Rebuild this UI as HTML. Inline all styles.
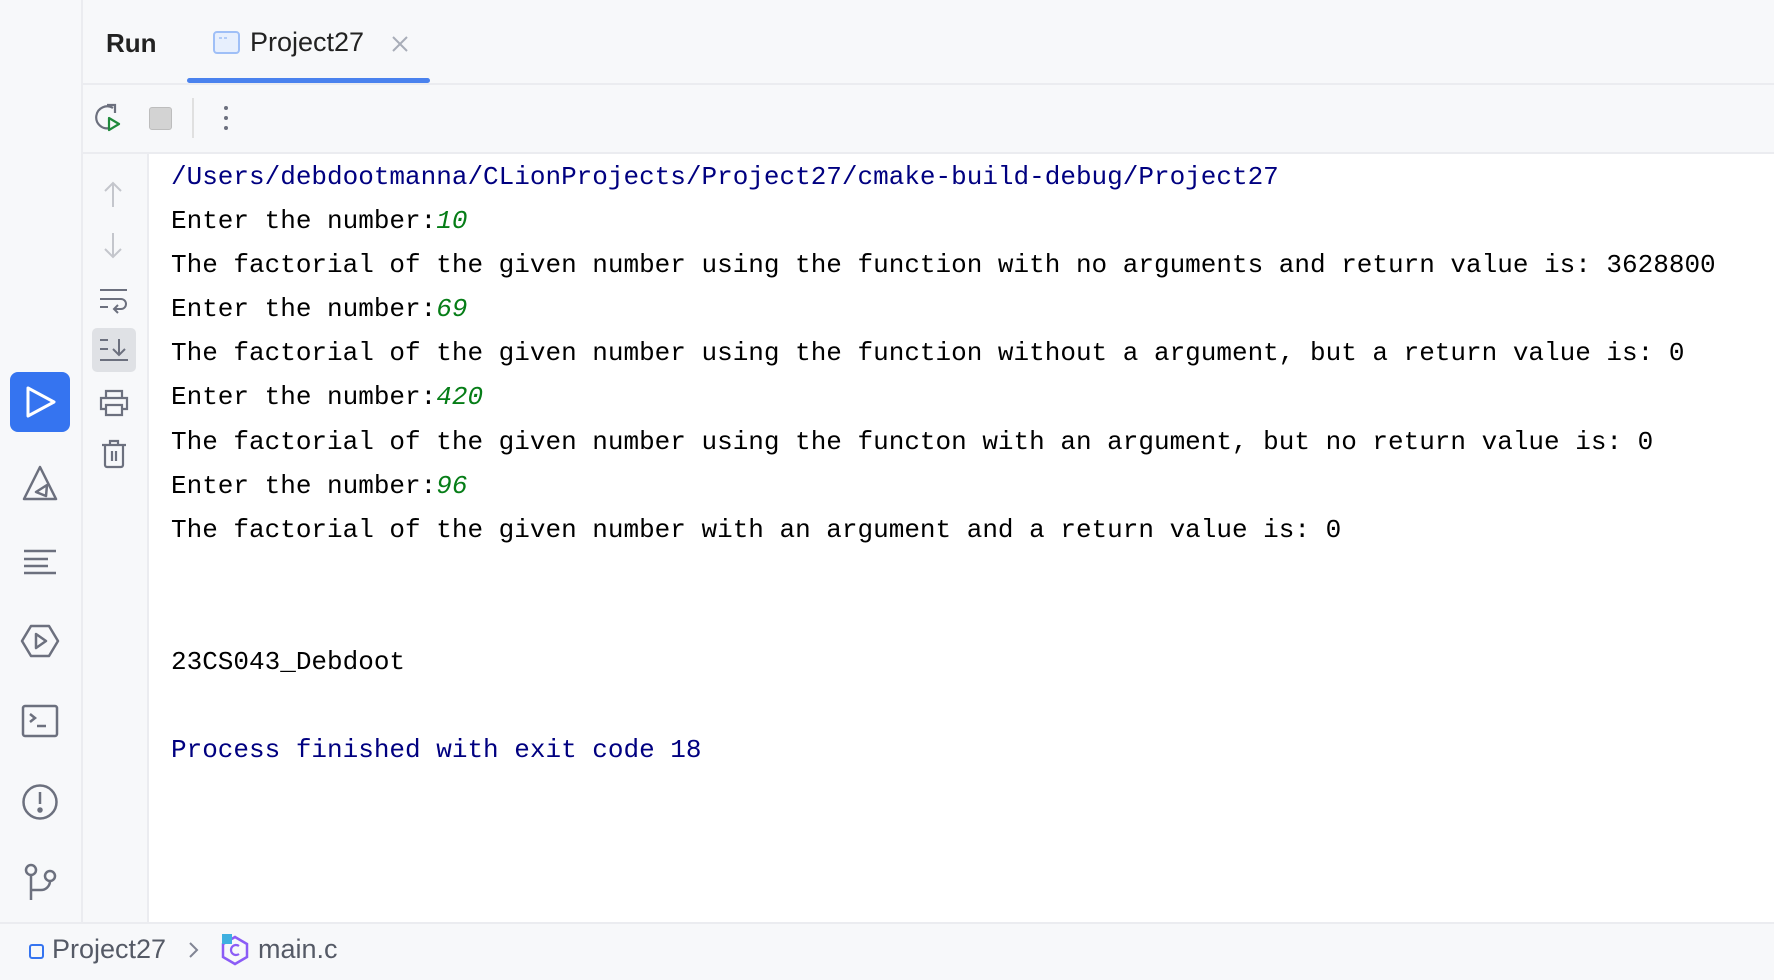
<!DOCTYPE html><html><head><style>
*{margin:0;padding:0;box-sizing:border-box}
body{width:1774px;height:980px;background:#f7f8fa;position:relative;overflow:hidden;font-family:"Liberation Sans",sans-serif}
.a{position:absolute}
.mono{font-family:"Liberation Mono",monospace;font-size:26px;white-space:pre;line-height:44.1px}
svg{position:absolute;overflow:visible}
</style></head><body>
<div class="a" style="left:81px;top:0;width:2px;height:922px;background:#ebecf0"></div>
<div class="a" style="left:83px;top:83px;width:1691px;height:2px;background:#ebecf0"></div>
<div class="a" style="left:83px;top:152px;width:1691px;height:2px;background:#ebecf0"></div>
<div class="a" style="left:147px;top:154px;width:1627px;height:768px;background:#fff;border-left:2px solid #ebecf0"></div>
<div class="a" style="left:0;top:922px;width:1774px;height:58px;background:#f7f8fa;border-top:2px solid #ebecf0"></div>
<!-- tabs -->
<div class="a" style="left:106px;top:28px;font-size:26px;font-weight:bold;color:#222">Run</div>
<svg style="left:213px;top:31px" width="28" height="24"><rect x="1" y="1" width="25" height="21" rx="3" fill="#e7effd" stroke="#9fbff7" stroke-width="2"/><path d="M6 7h3M11 7h3" stroke="#9fbff7" stroke-width="1.5"/></svg>
<div class="a" style="left:250px;top:27px;font-size:27px;color:#222">Project27</div>
<svg style="left:393px;top:37px" width="14" height="14"><path d="M0 0L14 14M14 0L0 14" stroke="#a8adb8" stroke-width="2"/></svg>
<div class="a" style="left:187px;top:78px;width:243px;height:5px;border-radius:3px;background:#4a82ee"></div>
<!-- toolbar -->
<svg style="left:94px;top:104px" width="30" height="30"><path d="M19 4a11 11 0 1 0-3 20" fill="none" stroke="#6c707e" stroke-width="2.2"/><path d="M13 1h8v8" fill="none" stroke="#6c707e" stroke-width="2.2"/><path d="M15 14l10 6-10 6z" fill="none" stroke="#208a3c" stroke-width="2.2" stroke-linejoin="round"/></svg>
<div class="a" style="left:149px;top:107px;width:23px;height:23px;border-radius:3px;background:#d3d3d3;border:1.5px solid #bdbdbd"></div>
<div class="a" style="left:192px;top:98px;width:2px;height:40px;background:#e0e0e0"></div>
<svg style="left:222px;top:106px" width="8" height="26"><circle cx="4" cy="2" r="2" fill="#6c707e"/><circle cx="4" cy="12" r="2" fill="#6c707e"/><circle cx="4" cy="22" r="2" fill="#6c707e"/></svg>
<!-- left strip -->
<div class="a" style="left:10px;top:372px;width:60px;height:60px;border-radius:8px;background:#3574f0"></div>
<svg style="left:26px;top:386px" width="30" height="32"><path d="M2 2L28 16L2 30Z" fill="none" stroke="#fff" stroke-width="3" stroke-linejoin="round"/></svg>
<svg style="left:22px;top:465px" width="36" height="36" fill="none" stroke="#6c707e" stroke-width="2.5"><path d="M18 2L34 34H2Z" stroke-linejoin="round"/><path d="M25 20L14 27L24 31Z" stroke-linejoin="round"/></svg>
<svg style="left:24px;top:549px" width="32" height="26" stroke="#6c707e" stroke-width="2.5"><path d="M0 2h32M0 10h24M0 17h24M0 24h32"/></svg>
<svg style="left:21px;top:624px" width="38" height="34" fill="none" stroke="#6c707e" stroke-width="2.5"><path d="M10 2h18l9 15-9 15H10L1 17Z" stroke-linejoin="round"/><path d="M15 10l10 7-10 7z" stroke-linejoin="round"/></svg>
<svg style="left:22px;top:705px" width="36" height="32" fill="none" stroke="#6c707e" stroke-width="2.5"><rect x="1" y="1" width="34" height="30" rx="2"/><path d="M8 9l5 4-5 4M15 21h9"/></svg>
<svg style="left:22px;top:784px" width="36" height="36" fill="none" stroke="#6c707e" stroke-width="2.5"><circle cx="18" cy="18" r="16.5"/><path d="M18 8v12"/><circle cx="18" cy="26" r="1.5" fill="#6c707e"/></svg>
<svg style="left:24px;top:864px" width="32" height="36" fill="none" stroke="#6c707e" stroke-width="2.5"><circle cx="7" cy="6" r="5"/><circle cx="26" cy="12" r="5"/><path d="M7 11v25M7 26h10a9 9 0 0 0 9-9"/></svg>
<!-- tool column -->
<svg style="left:104px;top:181px" width="18" height="26" stroke="#c4c6cc" stroke-width="2" fill="none"><path d="M9 2v24M1 10l8-8 8 8"/></svg>
<svg style="left:104px;top:233px" width="18" height="26" stroke="#c4c6cc" stroke-width="2" fill="none"><path d="M9 0v24M1 16l8 8 8-8"/></svg>
<svg style="left:99px;top:288px" width="30" height="24" stroke="#6c707e" stroke-width="2" fill="none"><path d="M1 2h27M1 11h21a5 5 0 0 1 0 10h-7M1 19h8M19 17l-4 4 4 4"/></svg>
<div class="a" style="left:92px;top:328px;width:44px;height:44px;border-radius:5px;background:#dfe1e5"></div>
<svg style="left:100px;top:339px" width="28" height="22" stroke="#6c707e" stroke-width="2" fill="none"><path d="M0 1h8M0 10h8M0 21h28M19 0v16M13 10l6 6 6-6"/></svg>
<svg style="left:100px;top:390px" width="28" height="26" stroke="#6c707e" stroke-width="2.2" fill="none"><path d="M6 8V1h16v7M6 19H1V8h26v11h-5M6 15h16v10H6z"/></svg>
<svg style="left:102px;top:440px" width="24" height="28" stroke="#6c707e" stroke-width="2.2" fill="none"><path d="M0 5h24M8 5V1h8v4M3 5v20a2 2 0 0 0 2 2h14a2 2 0 0 0 2-2V5M10 11v10M14 11v10"/></svg>
<!-- console -->
<div class="a mono" style="left:171px;top:155px;color:#000"><span style="color:#000080">/Users/debdootmanna/CLionProjects/Project27/cmake-build-debug/Project27</span>
Enter the number:<i style="color:#067d17">10</i>
The factorial of the given number using the function with no arguments and return value is: 3628800
Enter the number:<i style="color:#067d17">69</i>
The factorial of the given number using the function without a argument, but a return value is: 0
Enter the number:<i style="color:#067d17">420</i>
The factorial of the given number using the functon with an argument, but no return value is: 0
Enter the number:<i style="color:#067d17">96</i>
The factorial of the given number with an argument and a return value is: 0


23CS043_Debdoot

<span style="color:#000080">Process finished with exit code 18</span></div>
<!-- status bar -->
<div class="a" style="left:29px;top:944px;width:15px;height:15px;border:2.5px solid #3574f0;border-radius:3px"></div>
<div class="a" style="left:52px;top:934px;font-size:27px;color:#555a66">Project27</div>
<svg style="left:189px;top:942px" width="10" height="16" stroke="#818594" stroke-width="2" fill="none"><path d="M1 1l7 7-7 7"/></svg>
<svg style="left:220px;top:934px" width="30" height="32"><path d="M15 3l12 7v13l-12 7-12-7V10z" fill="none" stroke="#8b5cf6" stroke-width="2.5"/><path d="M19 12a5 5 0 1 0 0 8" fill="none" stroke="#8b5cf6" stroke-width="2.2"/><rect x="2" y="0" width="10" height="10" fill="#3fb0e0"/></svg>
<div class="a" style="left:258px;top:934px;font-size:27px;color:#555a66">main.c</div>
</body></html>
